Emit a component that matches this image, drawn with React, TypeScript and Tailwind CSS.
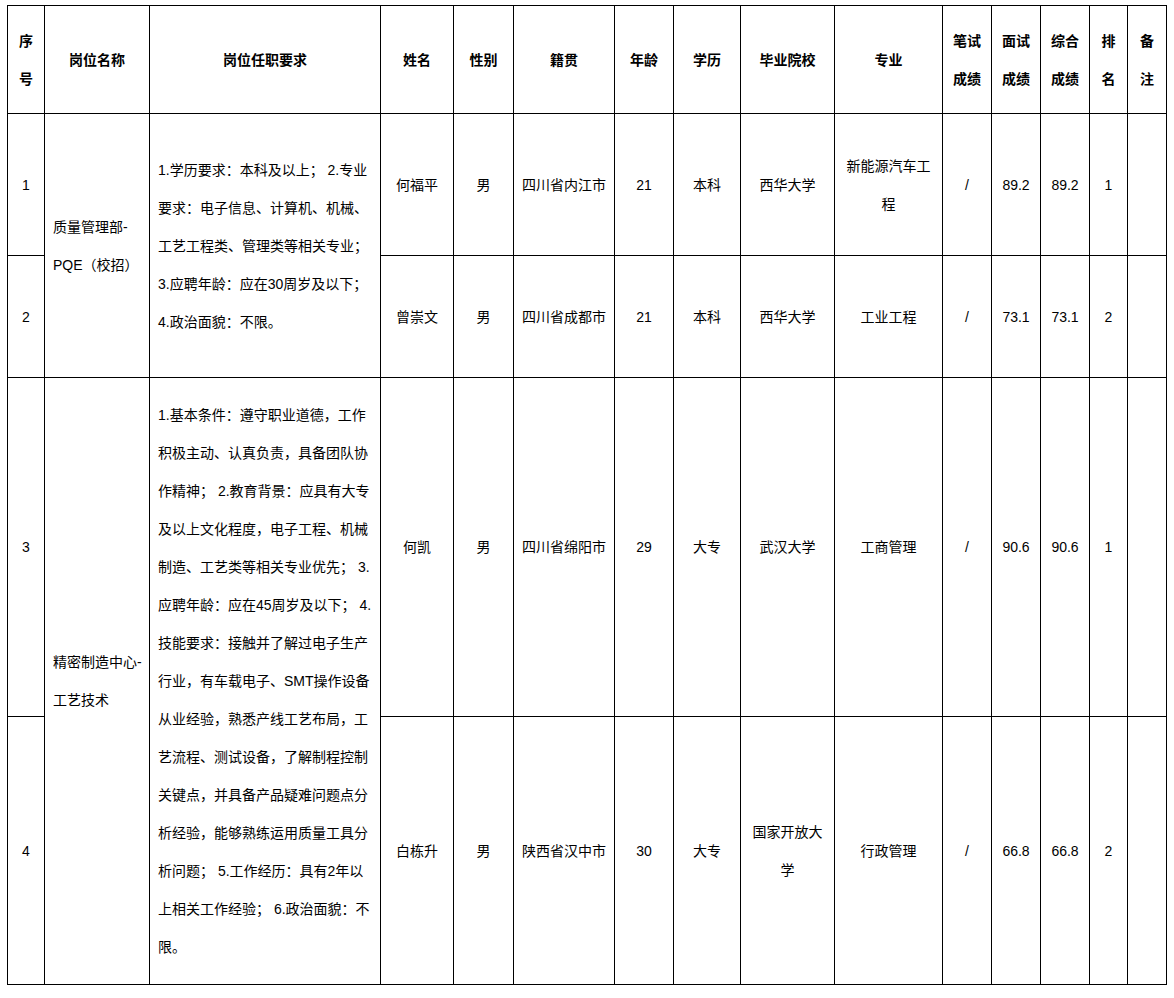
import React from "react";

const COLS = [37, 105, 231, 73, 60, 101, 59, 67, 94, 108, 49, 49, 49, 38, 39];

const HEADERS: string[][] = [
    ["序", "号"],
    ["岗位名称"],
    ["岗位任职要求"],
    ["姓名"],
    ["性别"],
    ["籍贯"],
    ["年龄"],
    ["学历"],
    ["毕业院校"],
    ["专业"],
    ["笔试", "成绩"],
    ["面试", "成绩"],
    ["综合", "成绩"],
    ["排", "名"],
    ["备", "注"],
];

type Person = {
    no: string;
    name: string;
    gender: string;
    origin: string;
    age: string;
    edu: string;
    school: string[];
    major: string[];
    written: string;
    interview: string;
    total: string;
    rank: string;
    h: string;
};

type Group = {
    post: string[];
    req: string[];
    people: Person[];
};

const groups: Group[] = [
    {
        post: ["质量管理部-", "PQE（校招）"],
        req: [
            "1.学历要求：本科及以上； 2.专业",
            "要求：电子信息、计算机、机械、",
            "工艺工程类、管理类等相关专业；",
            "3.应聘年龄：应在30周岁及以下；",
            "4.政治面貌：不限。",
        ],
        people: [
            {
                no: "1", name: "何福平", gender: "男", origin: "四川省内江市", age: "21", edu: "本科",
                school: ["西华大学"], major: ["新能源汽车工", "程"], written: "/", interview: "89.2", total: "89.2", rank: "1",
                h: "h-[142px]",
            },
            {
                no: "2", name: "曾崇文", gender: "男", origin: "四川省成都市", age: "21", edu: "本科",
                school: ["西华大学"], major: ["工业工程"], written: "/", interview: "73.1", total: "73.1", rank: "2",
                h: "h-[122px]",
            },
        ],
    },
    {
        post: ["精密制造中心-", "工艺技术"],
        req: [
            "1.基本条件：遵守职业道德，工作",
            "积极主动、认真负责，具备团队协",
            "作精神； 2.教育背景：应具有大专",
            "及以上文化程度，电子工程、机械",
            "制造、工艺类等相关专业优先； 3.",
            "应聘年龄：应在45周岁及以下； 4.",
            "技能要求：接触并了解过电子生产",
            "行业，有车载电子、SMT操作设备",
            "从业经验，熟悉产线工艺布局，工",
            "艺流程、测试设备，了解制程控制",
            "关键点，并具备产品疑难问题点分",
            "析经验，能够熟练运用质量工具分",
            "析问题； 5.工作经历：具有2年以",
            "上相关工作经验； 6.政治面貌：不",
            "限。",
        ],
        people: [
            {
                no: "3", name: "何凯", gender: "男", origin: "四川省绵阳市", age: "29", edu: "大专",
                school: ["武汉大学"], major: ["工商管理"], written: "/", interview: "90.6", total: "90.6", rank: "1",
                h: "h-[339px]",
            },
            {
                no: "4", name: "白栋升", gender: "男", origin: "陕西省汉中市", age: "30", edu: "大专",
                school: ["国家开放大", "学"], major: ["行政管理"], written: "/", interview: "66.8", total: "66.8", rank: "2",
                h: "h-[268px]",
            },
        ],
    },
];

const cell = "border border-black px-2 py-0 align-middle";

function Lines({ lines }: { lines: string[] }) {
    return (
        <>
            {lines.map((l, i) => (
                <React.Fragment key={i}>
                    {i > 0 && <br />}
                    {l}
                </React.Fragment>
            ))}
        </>
    );
}

export default function App() {
    return (
        <div
            className="bg-white min-h-[998px] pt-[5px] pl-[7px] text-black text-[14px] leading-[38px]"
            style={{ fontFamily: '"Liberation Sans", "Noto Sans CJK SC", sans-serif' }}
        >
            <table className="table-fixed border-collapse w-[1159px]">
                <colgroup>
                    {COLS.map((w, i) => (
                        <col key={i} style={{ width: w }} />
                    ))}
                </colgroup>
                <thead>
                    <tr className="h-[108px]">
                        {HEADERS.map((h, i) => (
                            <th key={i} className={`${cell} px-0 font-bold text-center`}>
                                <Lines lines={h} />
                            </th>
                        ))}
                    </tr>
                </thead>
                <tbody>
                    {groups.map((g) =>
                        g.people.map((p, idx) => (
                            <tr key={p.no} className={p.h}>
                                <td className={`${cell} text-center`}>{p.no}</td>
                                {idx === 0 && (
                                    <>
                                        <td rowSpan={g.people.length} className={`${cell} text-left whitespace-nowrap overflow-hidden`}>
                                            <Lines lines={g.post} />
                                        </td>
                                        <td rowSpan={g.people.length} className={`${cell} text-left whitespace-nowrap`}>
                                            <Lines lines={g.req} />
                                        </td>
                                    </>
                                )}
                                <td className={`${cell} text-center`}>{p.name}</td>
                                <td className={`${cell} text-center`}>{p.gender}</td>
                                <td className={`${cell} px-1 text-center whitespace-nowrap`}>{p.origin}</td>
                                <td className={`${cell} text-center`}>{p.age}</td>
                                <td className={`${cell} text-center`}>{p.edu}</td>
                                <td className={`${cell} text-center`}>
                                    <Lines lines={p.school} />
                                </td>
                                <td className={`${cell} text-center`}>
                                    <Lines lines={p.major} />
                                </td>
                                <td className={`${cell} text-center`}>{p.written}</td>
                                <td className={`${cell} px-0 text-center`}>{p.interview}</td>
                                <td className={`${cell} px-0 text-center`}>{p.total}</td>
                                <td className={`${cell} px-0 text-center`}>{p.rank}</td>
                                <td className={`${cell} text-center`}></td>
                            </tr>
                        ))
                    )}
                </tbody>
            </table>
        </div>
    );
}
